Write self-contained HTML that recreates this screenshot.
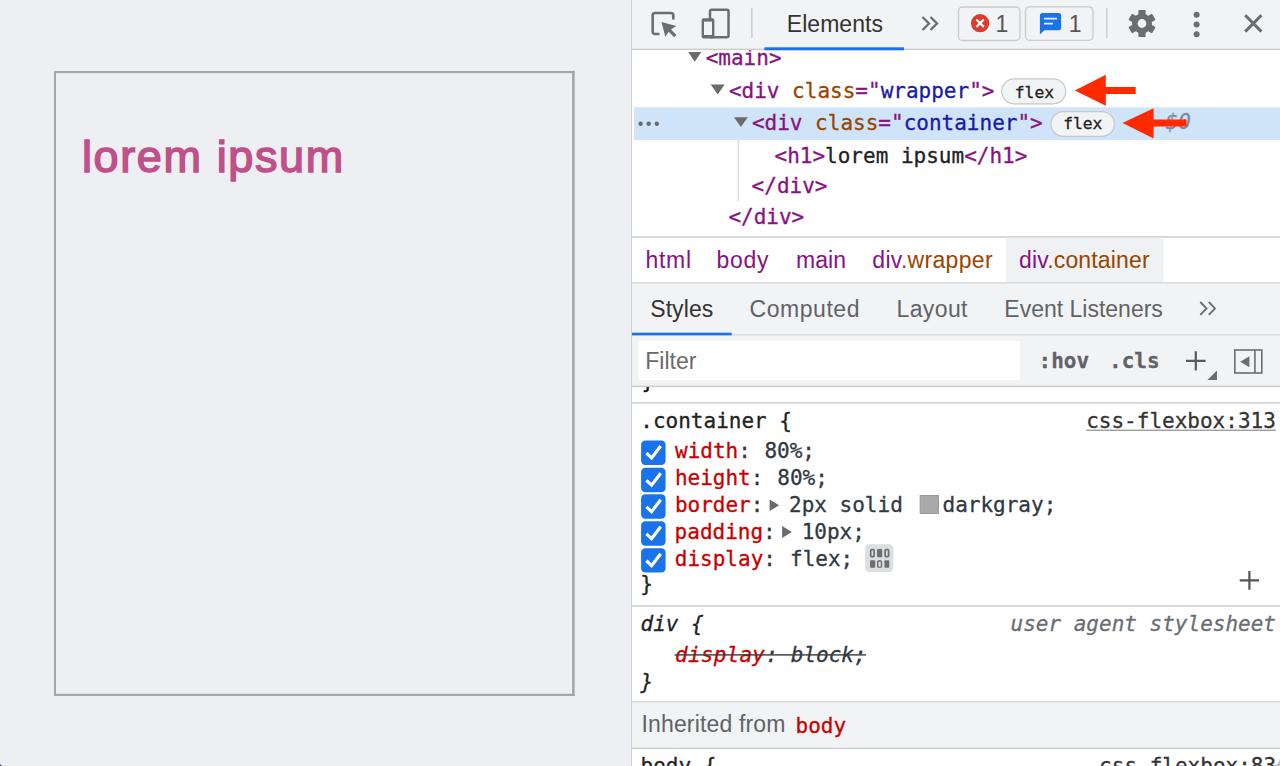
<!DOCTYPE html>
<html lang="en">
<head>
<meta charset="utf-8">
<title>lorem ipsum</title>
<style>
html,body{margin:0;padding:0;}
body{width:1280px;height:766px;position:relative;overflow:hidden;background:#edeff3;font-family:"Liberation Sans",sans-serif;}
.abs{position:absolute;}
.t{position:absolute;white-space:pre;}
.ui{font-family:"Liberation Sans",sans-serif;color:#333;}
.mono{font-family:"DejaVu Sans Mono","Liberation Mono",monospace;color:#222;-webkit-text-stroke-width:0.3px;}
svg{position:absolute;overflow:visible;}
.tag{color:#881280;}.an{color:#994500;}.av{color:#1a1aa6;}
.prop{color:#c80000;}.val{color:#303942;}
</style>
</head>
<body>
<svg style="left:0;top:0" width="632" height="766" viewBox="0 0 632 766"><g fill="#a3a6a9"><rect x="54" y="71" width="520.6" height="2.1"/><rect x="54" y="693.8" width="520.6" height="2.2"/><rect x="54" y="71" width="2" height="625"/><rect x="572.1" y="71" width="2.5" height="625"/></g></svg>
<div class="t ui" style="left:81.90px;top:130px;font-size:45px;line-height:51px;height:51px;transform:translateY(0.90px);color:#c0508a;letter-spacing:1.63px;-webkit-text-stroke:1.5px #c0508a;">lorem ipsum</div>
<svg style="left:0;top:760px" width="6" height="6" viewBox="0 0 6 6"><path d="M0 3 A3 3 0 0 0 3 6 L0 6 Z" fill="#2a1a6e"/></svg>
<div class="abs" style="left:631px;top:0;width:649px;height:766px;background:#fff;"></div>
<div class="abs" style="left:631px;top:0;width:1.2px;height:766px;background:#ced1d5;"></div>
<svg style="left:632px;top:0px" width="648" height="49" viewBox="632 0 648 49"><rect x="632" y="0" width="648" height="49" fill="#f1f3f4"/></svg>
<svg style="left:632px;top:48px" width="648" height="3" viewBox="632 48 648 3"><rect x="632" y="48.7" width="648" height="1.4" fill="#c9cacc"/></svg>
<svg style="left:0;top:0" width="1280" height="60" viewBox="0 0 1280 60" fill="none"><path d="M659.5 34 H655 a2.3 2.3 0 0 1 -2.3 -2.3 V15.3 a2.3 2.3 0 0 1 2.3 -2.3 H671 a2.3 2.3 0 0 1 2.3 2.3 V19.5" stroke="#6b6d6f" stroke-width="2.6"/><path d="M661.5 22 L676.3 26 L671 29.5 L676.5 35 L674.2 37.2 L668.7 31.7 L665.3 36.8 Z" fill="#6b6d6f"/><rect x="710" y="9.8" width="18.5" height="27.5" rx="1.5" stroke="#6b6d6f" stroke-width="2.5"/><rect x="701.6" y="18.3" width="12.8" height="20.3" rx="2" fill="#6b6d6f"/><rect x="704" y="21.6" width="8" height="13.4" fill="#f1f3f4"/><rect x="751" y="8" width="1.6" height="30" fill="#cdcfd2"/><rect x="1106" y="8" width="1.6" height="30" fill="#cdcfd2"/><path d="M922.5 17 L929 23.5 L922.5 30 M930.5 17 L937 23.5 L930.5 30" stroke="#6b6d6f" stroke-width="2.3"/><rect x="764.4" y="47.3" width="139.6" height="3.0" fill="#1a73e8"/><rect x="958.5" y="7" width="61.5" height="33.5" rx="4" fill="#f1f3f4" stroke="#c9cbce" stroke-width="1.3"/><circle cx="980.1" cy="23.2" r="9.1" fill="#dc3c2e"/><path d="M976.4 19.5 L983.8 26.9 M983.8 19.5 L976.4 26.9" stroke="#fff" stroke-width="2.2"/><rect x="1025.5" y="6.8" width="67.5" height="33.5" rx="4" fill="#f1f3f4" stroke="#c9cbce" stroke-width="1.3"/><path d="M1042.4 12.9 H1058.6 a2.5 2.5 0 0 1 2.5 2.5 V27.7 a2.5 2.5 0 0 1 -2.5 2.5 H1044.3 L1039.9 34.6 V15.4 a2.5 2.5 0 0 1 2.5 -2.5 Z" fill="#1a73e8"/><path d="M1044 18.6 H1057 M1044 23.6 H1053" stroke="#e8f0fe" stroke-width="1.8"/><g transform="translate(1142 23.5)"><g fill="#6b6d6f"><rect x="-3.6" y="-13.6" width="7.2" height="8" rx="0.8" transform="rotate(0)"/><rect x="-3.6" y="-13.6" width="7.2" height="8" rx="0.8" transform="rotate(60)"/><rect x="-3.6" y="-13.6" width="7.2" height="8" rx="0.8" transform="rotate(120)"/><rect x="-3.6" y="-13.6" width="7.2" height="8" rx="0.8" transform="rotate(180)"/><rect x="-3.6" y="-13.6" width="7.2" height="8" rx="0.8" transform="rotate(240)"/><rect x="-3.6" y="-13.6" width="7.2" height="8" rx="0.8" transform="rotate(300)"/></g><circle r="10" fill="#6b6d6f"/><circle r="4.4" fill="#f1f3f4"/></g><circle cx="1196.6" cy="14.8" r="3" fill="#6b6d6f"/><circle cx="1196.6" cy="24.6" r="3" fill="#6b6d6f"/><circle cx="1196.6" cy="34.3" r="3" fill="#6b6d6f"/><path d="M1245.2 15.3 L1261.4 31.6 M1261.4 15.3 L1245.2 31.6" stroke="#6b6d6f" stroke-width="3"/></svg>
<div class="t ui" style="left:786.80px;top:11px;font-size:23px;line-height:26px;height:26px;color:#333;letter-spacing:0.03px;">Elements</div>
<div class="t ui" style="left:995.60px;top:11px;font-size:23px;line-height:26px;height:26px;color:#555;">1</div>
<div class="t ui" style="left:1068.80px;top:11px;font-size:23px;line-height:26px;height:26px;color:#555;">1</div>
<svg style="left:634px;top:107px" width="646" height="34" viewBox="634 107 646 34"><rect x="634" y="107.3" width="646" height="32.8" fill="#cfe4f9"/></svg>
<svg style="left:0;top:0" width="1280" height="240" viewBox="0 0 1280 240"><path d="M688.2 52 H701.3 L694.75 61.8 Z" fill="#696b6e"/><path d="M710.7 84.4 H724.7 L717.7 94.6 Z" fill="#696b6e"/><path d="M734 117.2 H747.8 L740.9 127 Z" fill="#696b6e"/><circle cx="640.6" cy="123.7" r="2.2" fill="#696b6e"/><circle cx="648.7" cy="123.7" r="2.2" fill="#696b6e"/><circle cx="656.8" cy="123.7" r="2.2" fill="#696b6e"/><rect x="737.5" y="139.5" width="1.5" height="61.5" fill="#dcdde4"/><rect x="1001.7" y="78.8" width="64" height="25" rx="12.5" fill="#f1f3f4" stroke="#c6c8cb" stroke-width="1.2"/><rect x="1050.9" y="111.6" width="63.5" height="24.8" rx="12.4" fill="#f1f3f4" stroke="#c6c8cb" stroke-width="1.2"/></svg>
<div class="t mono" style="left:705.70px;top:46px;font-size:21px;line-height:24px;height:24px;clip-path:inset(4.3px 0 0 0);"><span class="tag">&lt;main&gt;</span></div>
<div class="t mono" style="left:728.90px;top:78px;font-size:21px;line-height:24px;height:24px;transform:translateY(0.65px);"><span class="tag">&lt;div </span><span class="an">class</span><span class="tag">="</span><span class="av">wrapper</span><span class="tag">"&gt;</span></div>
<div class="t mono" style="left:751.90px;top:110px;font-size:21px;line-height:24px;height:24px;transform:translateY(0.90px);"><span class="tag">&lt;div </span><span class="an">class</span><span class="tag">="</span><span class="av">container</span><span class="tag">"&gt;</span></div>
<div class="t mono" style="left:774.50px;top:143px;font-size:21px;line-height:24px;height:24px;transform:translateY(0.60px);"><span class="tag">&lt;h1&gt;</span>lorem ipsum<span class="tag">&lt;/h1&gt;</span></div>
<div class="t mono" style="left:751.60px;top:174px;font-size:21px;line-height:24px;height:24px;transform:translateY(0.25px);"><span class="tag">&lt;/div&gt;</span></div>
<div class="t mono" style="left:728.40px;top:204px;font-size:21px;line-height:24px;height:24px;transform:translateY(0.90px);"><span class="tag">&lt;/div&gt;</span></div>
<div class="t mono" style="left:1014.80px;top:82px;font-size:16.3px;line-height:19px;height:19px;transform:translateY(0.60px);color:#222;">flex</div>
<div class="t mono" style="left:1063.20px;top:114px;font-size:16.3px;line-height:19px;height:19px;color:#222;">flex</div>
<div class="t mono" style="left:1165.50px;top:110px;font-size:21px;line-height:24px;height:24px;transform:translateY(0.20px);color:#7f8b98;font-style:italic;">$0</div>
<svg style="left:0;top:0" width="1280" height="240" viewBox="0 0 1280 240"><path d="M1074.8 90.5 L1105.8 74.8 V87 H1135.7 V94.1 H1105.8 V105.7 Z" fill="#ff2a00"/><path d="M1122.5 123 L1153.6 108.3 V119.5 H1186.5 V126.4 H1153.6 V138.6 Z" fill="#ff2a00"/></svg>
<svg style="left:632px;top:236px" width="648" height="2" viewBox="632 236 648 2"><rect x="632" y="236.2" width="648" height="1.5" fill="#cbcccf"/></svg>
<svg style="left:1006px;top:237px" width="158" height="46" viewBox="1006 237 158 46"><rect x="1006" y="237.8" width="157.5" height="44.6" fill="#eff1f3"/></svg>
<svg style="left:632px;top:282px" width="648" height="2" viewBox="632 282 648 2"><rect x="632" y="282.3" width="648" height="1.5" fill="#cbcccf"/></svg>
<div class="t ui" style="left:645.50px;top:246px;font-size:23px;line-height:26px;height:26px;transform:translateY(0.80px);color:#881280;letter-spacing:0.7px;">html</div>
<div class="t ui" style="left:716.60px;top:246px;font-size:23px;line-height:26px;height:26px;transform:translateY(0.80px);color:#881280;letter-spacing:0.67px;">body</div>
<div class="t ui" style="left:796.00px;top:246px;font-size:23px;line-height:26px;height:26px;transform:translateY(0.80px);color:#881280;letter-spacing:0.03px;">main</div>
<div class="t ui" style="left:872.30px;top:246px;font-size:23px;line-height:26px;height:26px;transform:translateY(0.80px);color:#881280;letter-spacing:0.31px;">div<span style="color:#994500">.wrapper</span></div>
<div class="t ui" style="left:1019.00px;top:246px;font-size:23px;line-height:26px;height:26px;transform:translateY(0.80px);color:#881280;letter-spacing:0.16px;">div<span style="color:#994500">.container</span></div>
<svg style="left:632px;top:283px" width="648" height="52" viewBox="632 283 648 52"><rect x="632" y="283.5" width="648" height="51.5" fill="#f1f3f4"/></svg>
<svg style="left:632px;top:334px" width="648" height="2" viewBox="632 334 648 2"><rect x="632" y="334.3" width="648" height="1.3" fill="#cfd0d3"/></svg>
<svg style="left:632px;top:332px" width="100" height="4" viewBox="632 332 100 4"><rect x="632" y="332.7" width="99.7" height="2.9" fill="#1a73e8"/></svg>
<div class="t ui" style="left:650.20px;top:295px;font-size:23px;line-height:26px;height:26px;transform:translateY(0.90px);color:#333;letter-spacing:0.1px;">Styles</div>
<div class="t ui" style="left:749.60px;top:295px;font-size:23px;line-height:26px;height:26px;transform:translateY(0.90px);color:#5f6368;letter-spacing:0.54px;">Computed</div>
<div class="t ui" style="left:896.50px;top:295px;font-size:23px;line-height:26px;height:26px;transform:translateY(0.90px);color:#5f6368;letter-spacing:0.38px;">Layout</div>
<div class="t ui" style="left:1004.30px;top:295px;font-size:23px;line-height:26px;height:26px;transform:translateY(0.90px);color:#5f6368;letter-spacing:0.0px;">Event Listeners</div>
<svg style="left:0;top:280px" width="1280" height="60" viewBox="0 280 1280 60" fill="none"><path d="M1200.3 302 L1206.5 308.4 L1200.3 314.8 M1208.8 302 L1215 308.4 L1208.8 314.8" stroke="#6b6d6f" stroke-width="1.9"/></svg>
<svg style="left:632px;top:335px" width="648" height="52" viewBox="632 335 648 52"><rect x="632" y="335.6" width="648" height="50.5" fill="#f1f3f4"/></svg>
<svg style="left:632px;top:385px" width="648" height="3" viewBox="632 385 648 3"><rect x="632" y="385.7" width="648" height="1.5" fill="#cbcccf"/></svg>
<svg style="left:638px;top:341px" width="383" height="40" viewBox="638 341 383 40"><rect x="638.3" y="341" width="381.8" height="39.3" fill="#fff"/></svg>
<div class="t ui" style="left:645.20px;top:348px;font-size:23px;line-height:26px;height:26px;color:#6b6b6b;letter-spacing:0.04px;">Filter</div>
<div class="t mono" style="left:1038.50px;top:349px;font-size:21px;line-height:24px;height:24px;transform:translateY(0.30px);color:#5f6368;font-weight:bold;">:hov</div>
<div class="t mono" style="left:1109.00px;top:349px;font-size:21px;line-height:24px;height:24px;transform:translateY(0.30px);color:#5f6368;font-weight:bold;">.cls</div>
<svg style="left:0;top:340px" width="1280" height="50" viewBox="0 340 1280 50" fill="none"><path d="M1186 360.8 H1205.6 M1195.8 351.2 V370.5" stroke="#5a5a5a" stroke-width="2.2"/><path d="M1217 370.5 V379.9 H1207.4 Z" fill="#6b6d6f"/><rect x="1234.8" y="350" width="27" height="23" stroke="#6b6d6f" stroke-width="1.6"/><path d="M1254.9 350 V373" stroke="#6b6d6f" stroke-width="1.6"/><path d="M1249.4 356.3 V367.2 L1240.2 361.75 Z" fill="#6b6d6f"/></svg>
<div class="abs" style="left:632px;top:387.2px;width:648px;height:14px;overflow:hidden;">
<div class="t mono" style="left:9.60px;top:-19px;font-size:21px;line-height:24px;height:24px;transform:translateY(0.70px);color:#111;">}</div>
</div>
<svg style="left:632px;top:402px" width="648" height="2" viewBox="632 402 648 2"><rect x="632" y="402.2" width="648" height="1.5" fill="#cbcccf"/></svg>
<div class="t mono" style="left:640.30px;top:408px;font-size:21px;line-height:24px;height:24px;transform:translateY(0.80px);">.container {</div>
<div class="t mono" style="left:1086.20px;top:408px;font-size:21px;line-height:24px;height:24px;transform:translateY(0.70px);color:#333;text-decoration:underline;text-underline-offset:2.2px;text-decoration-thickness:1.2px;text-decoration-color:#777;">css-flexbox:313</div>
<div class="t mono" style="left:675.00px;top:438px;font-size:21px;line-height:24px;height:24px;transform:translateY(0.80px);"><span class="prop">width</span><span class="val">:</span></div>
<div class="t mono" style="left:764.40px;top:438px;font-size:21px;line-height:24px;height:24px;transform:translateY(0.80px);"><span class="val">80%;</span></div>
<div class="t mono" style="left:674.90px;top:466px;font-size:21px;line-height:24px;height:24px;transform:translateY(0.10px);"><span class="prop">height</span><span class="val">:</span></div>
<div class="t mono" style="left:777.30px;top:466px;font-size:21px;line-height:24px;height:24px;transform:translateY(0.10px);"><span class="val">80%;</span></div>
<div class="t mono" style="left:674.90px;top:492px;font-size:21px;line-height:24px;height:24px;transform:translateY(0.60px);"><span class="prop">border</span><span class="val">:</span></div>
<div class="t mono" style="left:674.60px;top:519px;font-size:21px;line-height:24px;height:24px;transform:translateY(0.60px);"><span class="prop">padding</span><span class="val">:</span></div>
<div class="t mono" style="left:674.80px;top:546px;font-size:21px;line-height:24px;height:24px;transform:translateY(0.50px);"><span class="prop">display</span><span class="val">:</span></div>
<div class="t mono" style="left:790.00px;top:546px;font-size:21px;line-height:24px;height:24px;transform:translateY(0.50px);"><span class="val">flex;</span></div>
<svg style="left:0;top:430px" width="1280" height="170" viewBox="0 430 1280 170" fill="none"><rect x="641.1" y="440.5" width="24.5" height="24.4" rx="4.2" fill="#1a73e8"/><path d="M646.4 453.1 L651.6 457.9 L660.7 446.0" stroke="#fff" stroke-width="3.2"/><rect x="641.1" y="467.8" width="24.5" height="24.4" rx="4.2" fill="#1a73e8"/><path d="M646.4 480.4 L651.6 485.2 L660.7 473.3" stroke="#fff" stroke-width="3.2"/><rect x="641.1" y="494.3" width="24.5" height="24.4" rx="4.2" fill="#1a73e8"/><path d="M646.4 506.9 L651.6 511.7 L660.7 499.8" stroke="#fff" stroke-width="3.2"/><rect x="641.1" y="521.3" width="24.5" height="24.4" rx="4.2" fill="#1a73e8"/><path d="M646.4 533.9 L651.6 538.7 L660.7 526.8" stroke="#fff" stroke-width="3.2"/><rect x="641.1" y="548.2" width="24.5" height="24.4" rx="4.2" fill="#1a73e8"/><path d="M646.4 560.8 L651.6 565.6 L660.7 553.7" stroke="#fff" stroke-width="3.2"/><path d="M769.6 499.4 L779.1 505.25 L769.6 511.1 Z" fill="#696b6e"/><path d="M782.1 526 L791.9 532.0 L782.1 538 Z" fill="#696b6e"/><rect x="920.2" y="495.5" width="18.3" height="18" fill="#a9a9a9" stroke="#9a9a9a" stroke-width="1"/><rect x="865" y="544.2" width="28.3" height="27.8" rx="4.5" fill="#dcdee1"/><rect x="870.7" y="549.7" width="3.4" height="6.9" rx="0.8" stroke="#6e6e6e" stroke-width="1.7"/><rect x="877" y="549" width="5.2" height="8.3" rx="1" fill="#6e6e6e"/><rect x="885.1" y="549.7" width="3.5" height="6.9" rx="0.8" stroke="#6e6e6e" stroke-width="1.7"/><rect x="870" y="560.3" width="5.2" height="7.5" rx="1" fill="#6e6e6e"/><rect x="877.7" y="561" width="3.8" height="6.1" rx="0.8" stroke="#6e6e6e" stroke-width="1.4"/><rect x="884.4" y="560.3" width="4.9" height="7.5" rx="1" fill="#6e6e6e"/><path d="M1239.7 580.3 H1259 M1249.4 571 V589.7" stroke="#555" stroke-width="2.2"/></svg>
<div class="t mono" style="left:789.00px;top:492px;font-size:21px;line-height:24px;height:24px;transform:translateY(0.60px);"><span class="val">2px solid</span></div>
<div class="t mono" style="left:942.50px;top:492px;font-size:21px;line-height:24px;height:24px;transform:translateY(0.60px);"><span class="val">darkgray;</span></div>
<div class="t mono" style="left:801.70px;top:519px;font-size:21px;line-height:24px;height:24px;transform:translateY(0.60px);"><span class="val">10px;</span></div>
<div class="t mono" style="left:640.30px;top:571px;font-size:21px;line-height:24px;height:24px;transform:translateY(0.50px);">}</div>
<svg style="left:632px;top:605px" width="648" height="2" viewBox="632 605 648 2"><rect x="632" y="605.2" width="648" height="1.5" fill="#cbcccf"/></svg>
<div class="t mono" style="left:640.50px;top:612px;font-size:21px;line-height:24px;height:24px;transform:translateY(0.40px);font-style:italic;">div {</div>
<div class="t mono" style="left:1010.50px;top:612px;font-size:21px;line-height:24px;height:24px;transform:translateY(0.20px);color:#6a6e73;font-style:italic;">user agent stylesheet</div>
<div class="t mono" style="left:675.00px;top:642px;font-size:21px;line-height:24px;height:24px;transform:translateY(0.70px);font-style:italic;letter-spacing:0.25px;"><span class="prop">display</span></div>
<div class="t mono" style="left:765.50px;top:642px;font-size:21px;line-height:24px;height:24px;transform:translateY(0.70px);font-style:italic;"><span class="val">: block;</span></div>
<svg style="left:674px;top:654px" width="192" height="2" viewBox="674 654 192 2"><rect x="674.5" y="654.2" width="191.5" height="1.4" fill="#3a3a3a"/></svg>
<div class="t mono" style="left:640.50px;top:669px;font-size:21px;line-height:24px;height:24px;transform:translateY(0.80px);font-style:italic;">}</div>
<svg style="left:632px;top:701px" width="648" height="2" viewBox="632 701 648 2"><rect x="632" y="701.3" width="648" height="1.5" fill="#cbcccf"/></svg>
<svg style="left:632px;top:702px" width="648" height="46" viewBox="632 702 648 46"><rect x="632" y="702.5" width="648" height="45.5" fill="#f1f3f4"/></svg>
<svg style="left:632px;top:747px" width="648" height="3" viewBox="632 747 648 3"><rect x="632" y="747.7" width="648" height="1.4" fill="#cbcccf"/></svg>
<div class="t ui" style="left:641.50px;top:711px;font-size:23px;line-height:26px;height:26px;transform:translateY(0.40px);color:#5f6368;letter-spacing:0.15px;">Inherited from</div>
<div class="t mono" style="left:795.50px;top:713px;font-size:21px;line-height:24px;height:24px;transform:translateY(0.60px);color:#c80000;">body</div>
<div class="t mono" style="left:640.50px;top:754px;font-size:21px;line-height:24px;height:24px;transform:translateY(0.20px);">body {</div>
<div class="t mono" style="left:1099.10px;top:754px;font-size:21px;line-height:24px;height:24px;transform:translateY(0.20px);color:#333;text-decoration:underline;text-underline-offset:3px;">css-flexbox:83</div>
<svg style="left:1270px;top:756px" width="10" height="10" viewBox="0 0 10 10"><path d="M10 2 A8 8 0 0 1 2 10 L10 10 Z" fill="#b9bbbf"/></svg>
</body>
</html>
